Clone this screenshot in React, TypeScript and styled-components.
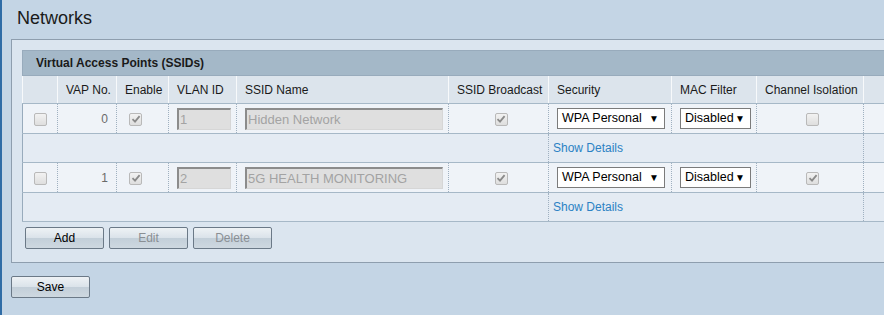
import React from 'react';
import styled, { createGlobalStyle } from 'styled-components';

type Vap = {
  no: number;
  vlan: string;
  ssid: string;
  security: string;
  mac: string;
  isolation: boolean;
};

const vaps: Vap[] = [
  { no: 0, vlan: '1', ssid: 'Hidden Network', security: 'WPA Personal', mac: 'Disabled', isolation: false },
  { no: 1, vlan: '2', ssid: '5G HEALTH MONITORING', security: 'WPA Personal', mac: 'Disabled', isolation: true },
];

const GlobalStyle = createGlobalStyle`
  html, body {
    margin: 0;
    padding: 0;
    background: #c4d5e5;
    overflow: hidden;
  }
  body {
    font-family: "Liberation Sans", Arial, sans-serif;
    font-size: 12px;
    color: #1a1a1a;
  }
`;

const Check: React.FC<{ checked?: boolean }> = ({ checked }) => (
  <CheckBox>
    {checked && (
      <svg width="10" height="10" viewBox="0 0 10 10">
        <path d="M1.5 5.2 L4 7.6 L8.6 2.2" fill="none" stroke="#8a8a8a" strokeWidth="1.8" />
      </svg>
    )}
  </CheckBox>
);

export default function App() {
  return (
    <Page>
      <GlobalStyle />
      <Title>Networks</Title>
      <Panel>
        <Table>
          <colgroup>
            <col style={{ width: 35 }} />
            <col style={{ width: 59 }} />
            <col style={{ width: 52 }} />
            <col style={{ width: 68 }} />
            <col style={{ width: 212 }} />
            <col style={{ width: 100 }} />
            <col style={{ width: 123 }} />
            <col style={{ width: 85 }} />
            <col style={{ width: 107 }} />
            <col style={{ width: 120 }} />
          </colgroup>
          <thead>
            <tr>
              <Caption colSpan={10}>Virtual Access Points (SSIDs)</Caption>
            </tr>
            <tr>
              <Th></Th>
              <Th>VAP No.</Th>
              <Th>Enable</Th>
              <Th>VLAN ID</Th>
              <Th>SSID Name</Th>
              <Th>SSID Broadcast</Th>
              <Th>Security</Th>
              <Th>MAC Filter</Th>
              <Th>Channel Isolation</Th>
              <Th></Th>
            </tr>
          </thead>
          <tbody>
            {vaps.map((v) => (
              <React.Fragment key={v.no}>
                <DataRow>
                  <Td $align="center"><Check /></Td>
                  <Td $align="right">{v.no}</Td>
                  <Td $pad={12}><Check checked /></Td>
                  <Td $pad={8}><TextField $width={54}>{v.vlan}</TextField></Td>
                  <Td $pad={8}><TextField $width={198}>{v.ssid}</TextField></Td>
                  <Td $align="center"><Check checked /></Td>
                  <Td $pad={8}><Select $width={108}>{v.security}<Arrow>▼</Arrow></Select></Td>
                  <Td $pad={8}><Select $width={71}>{v.mac}<Arrow>▼</Arrow></Select></Td>
                  <Td $align="center"><Check checked={v.isolation} /></Td>
                  <Td></Td>
                </DataRow>
                <DetailRow>
                  <DetailCell colSpan={6}></DetailCell>
                  <DetailCell colSpan={3}><Link>Show Details</Link></DetailCell>
                  <DetailCell></DetailCell>
                </DetailRow>
              </React.Fragment>
            ))}
          </tbody>
        </Table>
        <ButtonRow>
          <Button>Add</Button>
          <Button disabled>Edit</Button>
          <Button disabled>Delete</Button>
        </ButtonRow>
      </Panel>
      <SaveRow>
        <Button>Save</Button>
      </SaveRow>
    </Page>
  );
}

const Page = styled.div`
  border-left: 2px solid #2f6ca6;
  padding-left: 9px;
  min-height: 315px;
  box-sizing: border-box;
`;

const Title = styled.div`
  height: 39px;
  box-sizing: border-box;
  padding: 8px 0 0 6px;
  font-size: 18px;
  line-height: 21px;
  color: #1a1a1a;
`;

const Panel = styled.div`
  width: 1000px;
  border: 1px solid #8e9eae;
  background: #dbe5ef;
  padding: 10px 0 13px 10px;
`;

const Table = styled.table`
  border-collapse: collapse;
  table-layout: fixed;
  width: 961px;
  border: 1px solid #98abbc;
`;

const Caption = styled.th`
  height: 24px;
  padding: 0 0 0 13px;
  background: #a4b8c8;
  text-align: left;
  font-weight: bold;
  font-size: 12px;
  color: #1a1a1a;
`;

const Th = styled.th`
  height: 27px;
  padding: 0 4px 0 8px;
  background: #dce4ec;
  border-top: 1px solid #98abbc;
  border-left: 1px solid #f7f9fb;
  border-bottom: 1px solid #a6b8c7;
  text-align: left;
  font-weight: normal;
  font-size: 12px;
  white-space: nowrap;
  color: #1a1a1a;
`;

const DataRow = styled.tr`
  height: 30px;
  background: #eff3f8;
  border-bottom: 1px solid #a6b8c7;
`;

const Td = styled.td<{ $align?: 'left' | 'right' | 'center'; $pad?: number }>`
  padding: 0 ${(p) => (p.$align === 'right' ? '8px' : '4px')} 0 ${(p) => (p.$pad ?? 9)}px;
  text-align: ${(p) => p.$align ?? 'left'};
  border-left: 1px dotted #9fb0c0;
  vertical-align: middle;
  font-size: 12px;
  color: #6a6a6a;
  &:first-child { border-left: none; padding-left: 4px; }
`;

const DetailRow = styled.tr`
  height: 29px;
  background: #e4ebf3;
  border-bottom: 1px solid #a6b8c7;
`;

const DetailCell = styled.td`
  padding: 0 0 0 4px;
  border-left: 1px dotted #9fb0c0;
  &:first-child { border-left: none; }
`;

const Link = styled.span`
  color: #2b82c4;
  font-size: 12px;
`;

const CheckBox = styled.span`
  display: inline-flex;
  align-items: center;
  justify-content: center;
  width: 11px;
  height: 11px;
  border: 1px solid #b9b9b9;
  border-radius: 2px;
  background: linear-gradient(#f2f2f2, #dedede);
  vertical-align: middle;
`;

const TextField = styled.div<{ $width: number }>`
  width: ${(p) => p.$width}px;
  height: 22px;
  box-sizing: border-box;
  border-style: solid;
  border-width: 2px 1px 1px 2px;
  border-color: #8c8c8c #d6d6d6 #d6d6d6 #8c8c8c;
  background: #dfdfdf;
  color: #a3a3a3;
  font-size: 13px;
  line-height: 19px;
  padding-left: 1px;
  white-space: nowrap;
  overflow: hidden;
`;

const Select = styled.div<{ $width: number }>`
  position: relative;
  width: ${(p) => p.$width}px;
  height: 21px;
  box-sizing: border-box;
  border: 1px solid #7b7b7b;
  background: #fff;
  color: #000;
  font-size: 12.5px;
  line-height: 19px;
  padding-left: 4px;
  white-space: nowrap;
`;

const Arrow = styled.span`
  position: absolute;
  right: 5px;
  top: 0;
  font-size: 10px;
  color: #000;
`;

const ButtonRow = styled.div`
  display: flex;
  gap: 5px;
  margin: 5px 0 0 3px;
`;

const Button = styled.button`
  width: 79px;
  height: 22px;
  padding: 0;
  border: 1px solid #6b7987;
  border-radius: 2px;
  background: linear-gradient(#eef2f5 0%, #dbe3ea 48%, #c3cfd9 52%, #ced8e0 100%);
  font-family: "Liberation Sans", Arial, sans-serif;
  font-size: 12px;
  color: #000;
  &:disabled { color: #8a8f94; }
`;

const SaveRow = styled.div`
  margin-top: 13px;
`;
